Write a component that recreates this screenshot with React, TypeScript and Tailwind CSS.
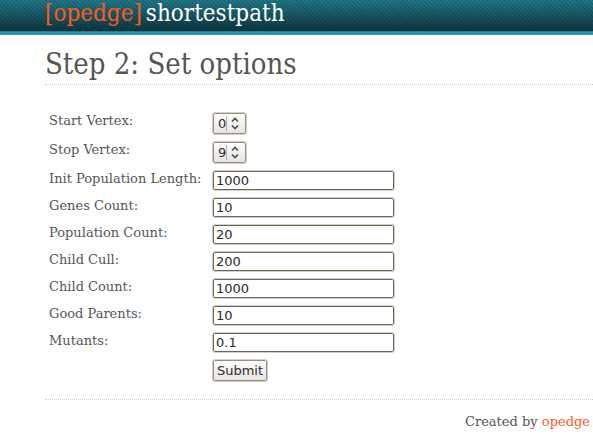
const fields = [
  { id: "population-length", label: "Init Population Length:", value: "1000" },
  { id: "genes-count", label: "Genes Count:", value: "10" },
  { id: "population-count", label: "Population Count:", value: "20" },
  { id: "child-cull", label: "Child Cull:", value: "200" },
  { id: "child-count", label: "Child Count:", value: "1000" },
  { id: "good-parents", label: "Good Parents:", value: "10" },
  { id: "mutants", label: "Mutants:", value: "0.1" },
];

const vertices = ["0", "1", "2", "3", "4", "5", "6", "7", "8", "9"];

function VertexRow({ id, label, value }: { id: string; label: string; value: string }) {
  return (
    <div className="flex h-[29px] items-start">
      <label htmlFor={id} className="w-[163px] leading-[18px]">
        {label}
      </label>
      <div className="relative">
        <select
          id={id}
          defaultValue={value}
          className="block h-[23px] w-[35px] appearance-none rounded-[3px] border border-[#d3cec6] bg-linear-to-b from-white to-[#e6e3de] pl-[5px] font-['DejaVu_Sans',sans-serif] text-[13px] text-[#2b2b2b] shadow-[inset_0_0_0_1px_#978e82]"
        >
          {vertices.map((v) => (
            <option key={v}>{v}</option>
          ))}
        </select>
        <svg
          viewBox="0 0 16 15"
          className="pointer-events-none absolute top-1 left-[14px] h-[15px] w-4"
          fill="none"
          aria-hidden="true"
        >
          <path d="M.5 0v15" stroke="#b5aea4" />
          <path d="M6 5.5 9 2.5l3 3M6 9.5l3 3 3-3" stroke="#4a4a4a" strokeWidth="1.6" />
        </svg>
      </div>
    </div>
  );
}

export default function App() {
  return (
    <div className="bg-white font-['DejaVu_Serif',serif] text-[13px] text-[#555555]">
      <header className="h-[35px] border-b-3 border-[#2a97ad] bg-[repeating-linear-gradient(45deg,rgba(0,0,0,0.16)_0px,rgba(0,0,0,0.16)_1px,transparent_2px,transparent_3px),linear-gradient(to_bottom,#217b8d,#0e343d)] pl-[45px] shadow-[inset_0_-1px_0_#217f91]">
        <a href="#" className="block font-['DejaVu_Serif_Condensed','DejaVu_Serif',serif] text-2xl leading-[26px] text-white">
          <span className="text-[#ff5a1f]">[opedge]</span>
          <span className="ml-1">shortestpath</span>
        </a>
      </header>
      <main className="pl-[45px]">
        <h1 className="h-[50px] border-b border-dotted border-[#cccccc] pt-3 font-['DejaVu_Serif_Condensed','DejaVu_Serif',serif] text-[29px] leading-[34px]">
          Step 2: Set options
        </h1>
        <form className="mt-[27px] px-1" onSubmit={(e) => e.preventDefault()}>
          <VertexRow id="start-vertex" label="Start Vertex:" value="0" />
          <VertexRow id="stop-vertex" label="Stop Vertex:" value="9" />
          {fields.map((f) => (
            <div key={f.id} className="flex h-[27px] items-start">
              <label htmlFor={f.id} className="w-[163px] leading-[18px]">
                {f.label}
              </label>
              <input
                id={f.id}
                type="text"
                defaultValue={f.value}
                className="h-[21px] w-[183px] rounded-[3px] border border-[#d3cec6] bg-white px-[3px] font-['DejaVu_Sans',sans-serif] text-[13px] text-[#2b2b2b] shadow-[inset_0_0_0_1px_#6b6456]"
              />
            </div>
          ))}
          <button
            type="submit"
            className="ml-[163px] block h-[23px] w-14 rounded-[3px] border border-[#d3cec6] bg-linear-to-b from-white to-[#e6e3de] font-['DejaVu_Sans',sans-serif] text-[13px] leading-[21px] text-[#2b2b2b] shadow-[inset_0_0_0_1px_#978e82]"
          >
            Submit
          </button>
        </form>
        <footer className="mt-[17px] border-t border-dotted border-[#cccccc] pt-3 pr-[3px] text-right leading-5">
          Created by{" "}
          <a href="#" className="text-[#ff5a1f]">
            opedge
          </a>
        </footer>
      </main>
    </div>
  );
}
